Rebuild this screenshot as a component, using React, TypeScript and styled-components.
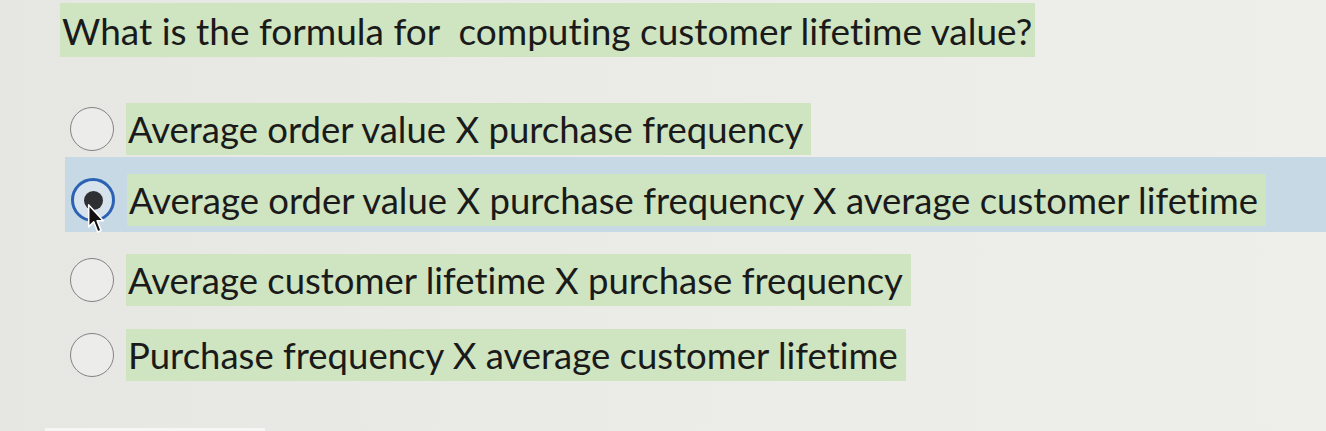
import React, { useState } from 'react'
import styled, { createGlobalStyle } from 'styled-components'

const GlobalStyle = createGlobalStyle`
  html, body {
    margin: 0;
    padding: 0;
    height: 100%;
  }
  body {
    background: linear-gradient(90deg, #e6e6e3 0%, #ebebe8 50%, #eeeeeb 100%);
    font-family: Lato, 'Open Sans', sans-serif;
    font-variant-ligatures: none;
    color: #1a1a1a;
    overflow: hidden;
  }
`

const Page = styled.div`
  width: 1326px;
  height: 431px;
  box-sizing: border-box;
  padding: 3px 0 0 60px;
  display: flex;
  flex-direction: column;
  align-items: flex-start;
  position: relative;
`

// green highlight behind the prompt text
const Question = styled.h2`
  margin: 0;
  height: 54px;
  display: flex;
  align-items: center;
  padding: 0 3px 0 2px;
  background: #cfe4c0;
  font-size: 37px;
  font-weight: 400;
  white-space: pre;
`

const Options = styled.div`
  display: flex;
  flex-direction: column;
  align-self: stretch;
`

const OptionRow = styled.label<{ $selected?: boolean; $gap: number }>`
  display: flex;
  align-items: ${({ $selected }) => ($selected ? 'flex-end' : 'center')};
  gap: 12px;
  margin-top: ${({ $gap }) => $gap}px;
  margin-left: 5px;
  padding: ${({ $selected }) => ($selected ? '17px 0 6px 6px' : '0 0 0 5px')};
  background: ${({ $selected }) => ($selected ? '#c6d9e5' : 'transparent')};
  position: relative;
  cursor: pointer;
`

const Radio = styled.span<{ $checked?: boolean }>`
  flex: none;
  width: 44px;
  height: 44px;
  box-sizing: border-box;
  border-radius: 50%;
  border: ${({ $checked }) => ($checked ? '3px solid #2b62b4' : '1.5px solid #838386')};
  background: ${({ $checked }) => ($checked ? '#d6e2ec' : '#ececea')};
  display: flex;
  align-items: center;
  justify-content: center;
  margin-bottom: ${({ $checked }) => ($checked ? '4px' : '0')};

  &::after {
    content: '';
    display: ${({ $checked }) => ($checked ? 'block' : 'none')};
    width: 19px;
    height: 19px;
    border-radius: 50%;
    background: #2e3034;
  }
`

const OptionText = styled.span`
  height: 52px;
  display: flex;
  align-items: center;
  padding: 0 8px 0 2px;
  background: #cfe4c0;
  font-size: 36.5px;
  white-space: nowrap;
`

const Pointer = styled.svg`
  position: absolute;
  left: 22px;
  top: 46px;
  pointer-events: none;
`

// next block peeking in at the bottom edge
const NextCard = styled.div`
  position: absolute;
  left: 45px;
  bottom: -6px;
  width: 220px;
  height: 9px;
  background: #f6f6f4;
`

const answers = [
  { text: 'Average order value X purchase frequency', gap: 46 },
  { text: 'Average order value X purchase frequency X average customer lifetime', gap: 2 },
  { text: 'Average customer lifetime X purchase frequency', gap: 22 },
  { text: 'Purchase frequency X average customer lifetime', gap: 23 },
]

const App = () => {
  const [picked, setPicked] = useState(1)

  return (
    <>
      <GlobalStyle />
      <Page>
        <Question>{'What is the formula for  computing customer lifetime value?'}</Question>
        <Options>
          {answers.map((a, i) => (
            <OptionRow key={a.text} $selected={picked === i} $gap={a.gap} onClick={() => setPicked(i)}>
              <Radio $checked={picked === i} />
              <OptionText>{a.text}</OptionText>
              {picked === i && (
                <Pointer width="18" height="32" viewBox="0 0 16 28">
                  <path
                    d="M1.5 1.5 L1.5 21 L6 16.5 L9.5 25.5 L12.5 24.2 L9 15.5 L14.5 15.5 Z"
                    fill="#111"
                    stroke="#fff"
                    strokeWidth="1.4"
                    strokeLinejoin="round"
                  />
                </Pointer>
              )}
            </OptionRow>
          ))}
        </Options>
        <NextCard />
      </Page>
    </>
  )
}

export default App
